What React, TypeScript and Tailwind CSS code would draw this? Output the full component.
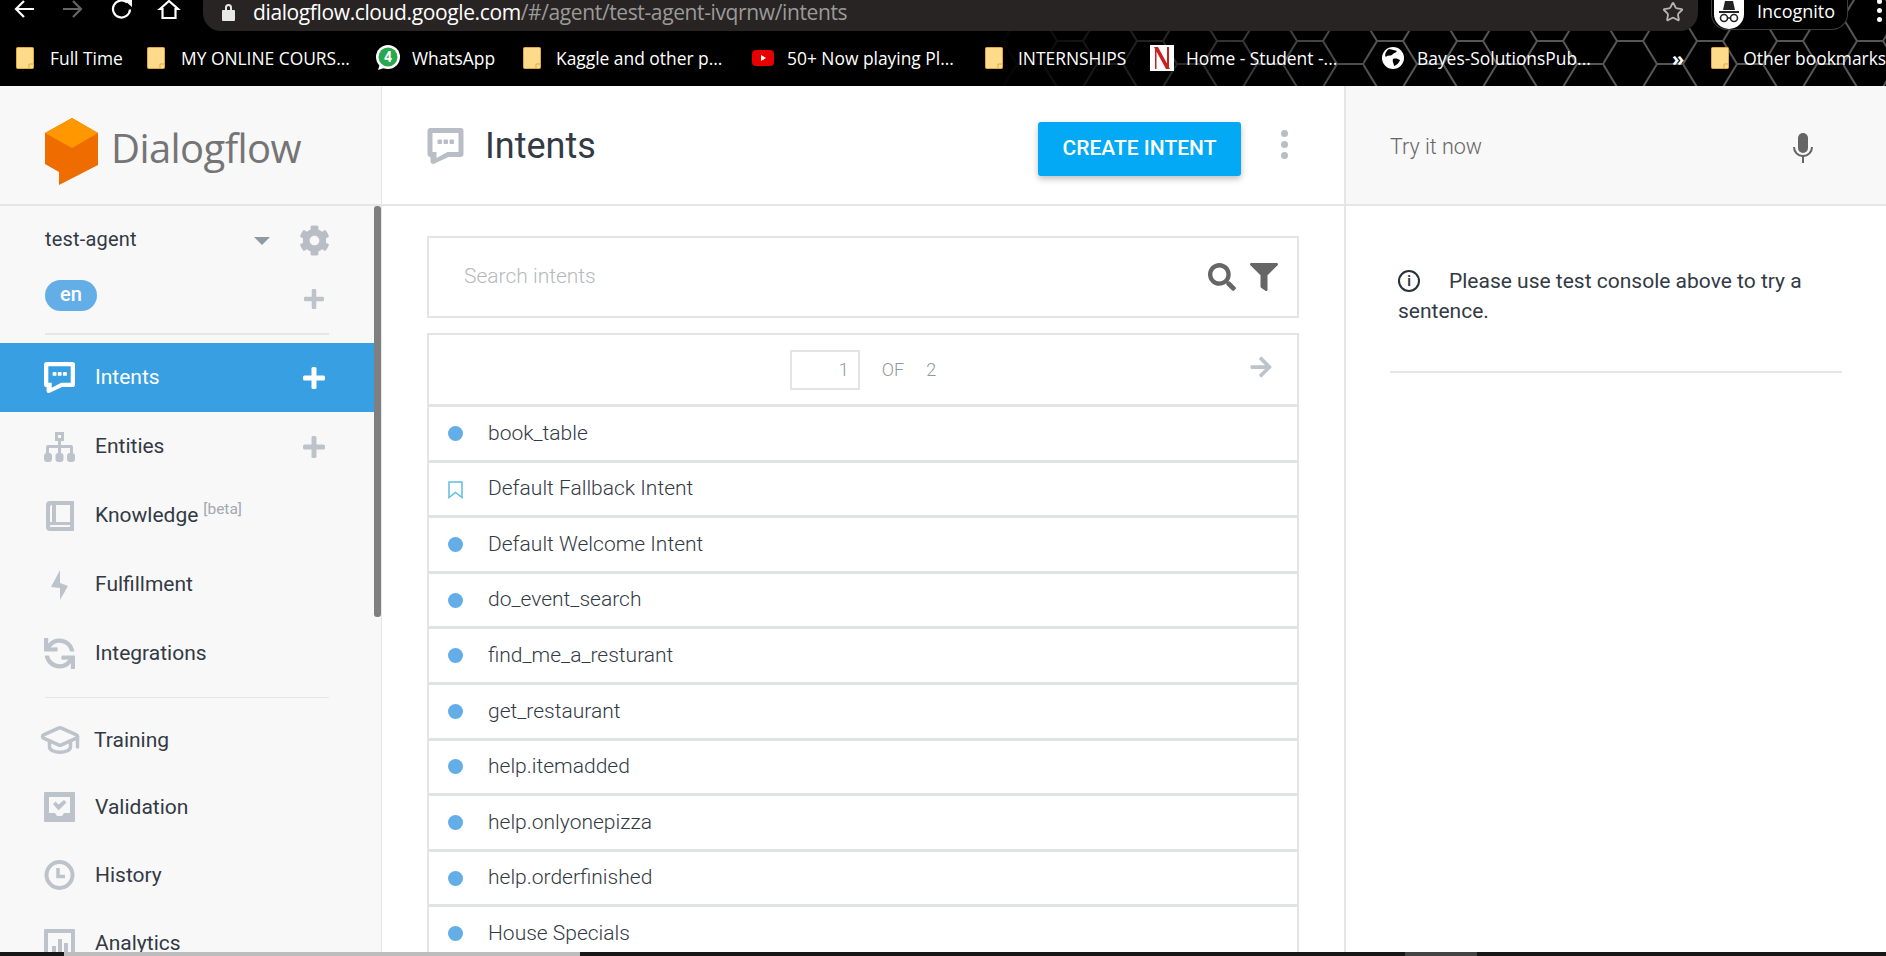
import { Star, GraduationCap } from "lucide-react";
import { FaArrowRight, FaCog, FaFilter, FaSearch, FaSync } from "react-icons/fa";
import type { ReactNode } from "react";

const intents = [
  "book_table",
  "Default Fallback Intent",
  "Default Welcome Intent",
  "do_event_search",
  "find_me_a_resturant",
  "get_restaurant",
  "help.itemadded",
  "help.onlyonepizza",
  "help.orderfinished",
  "House Specials",
];

function Folder() {
  return (
    <svg width="18" height="22" viewBox="0 0 18 22" className="shrink-0">
      <rect x="0.5" y="0.5" width="17" height="21" rx="1" fill="#fedb8b" stroke="#e0a93c" />
      <path d="M13 21v-4h4" fill="none" stroke="#e0a93c" />
    </svg>
  );
}

function WhatsApp() {
  return (
    <svg width="24" height="26" viewBox="0 0 24 26" className="shrink-0">
      <circle cx="12" cy="12" r="12" fill="#fff" />
      <circle cx="12" cy="12" r="9.5" fill="#2aa84f" />
      <path d="M2 25l2-6 4 4z" fill="#fff" />
      <text x="12" y="17" textAnchor="middle" fontSize="14" fontWeight="700" fill="#fff" fontFamily="Roboto, sans-serif">4</text>
    </svg>
  );
}

function YouTube() {
  return (
    <svg width="22" height="22" viewBox="0 0 22 22" className="shrink-0">
      <rect x="0" y="3" width="22" height="16" rx="4" fill="#e60000" />
      <path d="M9 8l5 3-5 3z" fill="#fff" />
    </svg>
  );
}

function NetflixN() {
  return (
    <div className="w-[24px] h-[26px] bg-white shrink-0 flex items-center justify-center">
      <svg width="20" height="24" viewBox="0 0 20 24">
        <path d="M3 1h1.500v22H3zM15 1h2v22h-2zM2 1h4l12 22h-4z" fill="#c8201c" />
      </svg>
    </div>
  );
}

function Globe() {
  return (
    <svg width="22" height="22" viewBox="0 0 22 22" className="shrink-0">
      <circle cx="11" cy="11" r="11" fill="#fff" />
      <path d="M7 2c3 1 6 1 8 2-1 2-4 2-5 4-2 1-5 0-6 2C2 8 4 4 7 2zM11 12c3-1 5 0 7 1-1 3-3 5-6 6 0-3-2-4-1-7z" fill="#000" />
    </svg>
  );
}

const bookmarks: { label: string; icon: ReactNode; width: string; gap: string }[] = [
  { label: "Full Time", icon: <Folder />, width: "w-[131px]", gap: "gap-[16px]" },
  { label: "MY ONLINE COURS...", icon: <Folder />, width: "w-[229px]", gap: "gap-[16px]" },
  { label: "WhatsApp", icon: <WhatsApp />, width: "w-[147px]", gap: "gap-[12px]" },
  { label: "Kaggle and other p...", icon: <Folder />, width: "w-[229px]", gap: "gap-[15px]" },
  { label: "50+ Now playing Pl...", icon: <YouTube />, width: "w-[233px]", gap: "gap-[13px]" },
  { label: "INTERNSHIPS", icon: <Folder />, width: "w-[165px]", gap: "gap-[15px]" },
  { label: "Home - Student -...", icon: <NetflixN />, width: "w-[232px]", gap: "gap-[12px]" },
  { label: "Bayes-SolutionsPub...", icon: <Globe />, width: "w-[290px]", gap: "gap-[13px]" },
];

function IntentsIcon({ className }: { className?: string }) {
  return (
    <svg viewBox="0 0 36 36" className={className} fill="currentColor">
      <path d="M3 0h30a3 3 0 0 1 3 3v23a3 3 0 0 1-3 3H21L6 36a3 3 0 0 1-3-3v-4a3 3 0 0 1-3-3V3a3 3 0 0 1 3-3zm2 5v19h4v6l11-6h11V5z" fillRule="evenodd" />
      <rect x="10" y="11.5" width="4.5" height="4.5" rx="1" />
      <rect x="16" y="11.5" width="4.5" height="4.5" rx="1" />
      <rect x="22" y="11.5" width="4.5" height="4.5" rx="1" />
    </svg>
  );
}

function EntitiesIcon() {
  return (
    <svg viewBox="0 0 31 30" className="w-[31px] h-[30px]" fill="#bdc3cb">
      <path d="M11 0h9v9h-3v4h10a2 2 0 0 1 2 2v6h-3v-5h-9v5h-3v-5H5v5H2v-6a2 2 0 0 1 2-2h10V9h-3zm3 3v3h3V3z" fillRule="evenodd" />
      <rect x="0" y="21" width="8" height="9" rx="3" />
      <rect x="11.5" y="21" width="8" height="9" rx="3" />
      <rect x="23" y="21" width="8" height="9" rx="3" />
    </svg>
  );
}

function KnowledgeIcon() {
  return (
    <svg viewBox="0 0 28 30" className="w-[28px] h-[30px]" fill="#bdc3cb">
      <path d="M4 0h24v30H4a4 4 0 0 1-4-4V4a4 4 0 0 1 4-4zm2 4a2 2 0 0 0-2 2v15h2zm4 0v17h14V4zM4 25v1h20v-2H5a1 1 0 0 0-1 1z" fillRule="evenodd" />
    </svg>
  );
}

function BoltIcon() {
  return (
    <svg viewBox="0 0 17 30" className="w-[17px] h-[30px]" fill="#bdc3cb">
      <path d="M9 0v13l8 3-8 14V18L0 17z" />
    </svg>
  );
}

function ValidationIcon() {
  return (
    <svg viewBox="0 0 31 30" className="w-[31px] h-[30px]" fill="#bdc3cb">
      <path d="M1 0h29a1 1 0 0 1 1 1v28a1 1 0 0 1-1 1H1a1 1 0 0 1-1-1V1a1 1 0 0 1 1-1zm4 5v16h6l2 3h5l2-3h6V5z" fillRule="evenodd" />
      <path d="M9 12l2.500-2.500 3 3L20 8l2.500 2.500-8 8z" />
    </svg>
  );
}

function HistoryIcon() {
  return (
    <svg viewBox="0 0 31 30" className="w-[31px] h-[30px]" fill="none" stroke="#bdc3cb">
      <circle cx="15.500" cy="15" r="13" strokeWidth="4" />
      <path d="M14 8v8.500h7" strokeWidth="3.500" />
    </svg>
  );
}

function AnalyticsIcon() {
  return (
    <svg viewBox="0 0 31 30" className="w-[31px] h-[30px]" fill="#bdc3cb">
      <path d="M1 0h29a1 1 0 0 1 1 1v28a1 1 0 0 1-1 1H1a1 1 0 0 1-1-1V1a1 1 0 0 1 1-1zm3 4v22h23V4z" fillRule="evenodd" />
      <rect x="8" y="17" width="4" height="9" />
      <rect x="14" y="10" width="4" height="16" />
      <rect x="20" y="14" width="4" height="12" />
    </svg>
  );
}

function PlusIcon({ className }: { className: string }) {
  return (
    <svg viewBox="0 0 22 22" className={className} fill="currentColor">
      <rect x="8.500" y="0" width="5" height="22" rx="1.500" />
      <rect x="0" y="8.500" width="22" height="5" rx="1.500" />
    </svg>
  );
}

function NavRow({ icon, label, plus, active, height = "h-[69px]", beta, textClass = "ml-[20px]" }: {
  icon: ReactNode;
  label: string;
  plus?: boolean;
  active?: boolean;
  height?: string;
  beta?: boolean;
  textClass?: string;
}) {
  return (
    <div className={`${height} w-[374px] flex items-center pl-[44px] ${active ? "bg-[#389fe2] text-white" : "text-[#333a45]"}`}>
      <div className="w-[31px] flex justify-center shrink-0">{icon}</div>
      <span className={`${textClass} text-[21px] leading-none`}>{label}</span>
      {beta && <span className="ml-[5px] -mt-[12px] text-[15.500px] leading-none text-[#a3a9b1]">[beta]</span>}
      {plus && (
        <div className="ml-auto mr-[49px]">
          <PlusIcon className={`w-[22px] h-[22px] ${active ? "text-white" : "text-[#bdc3cb]"}`} />
        </div>
      )}
    </div>
  );
}

function Sidebar() {
  return (
    <aside className="relative w-[382px] shrink-0 bg-[#f8f8f8] border-r border-[#e6e6e6] overflow-hidden">
      <div className="h-[120px] border-b-2 border-[#e6e6e6] flex items-start pl-[45px] pt-[32px]">
        <svg width="53" height="67" viewBox="0 0 53 67" className="shrink-0">
          <path d="M27 0l26 15v32L14 67V54L0 46V15z" fill="#ef6c00" />
          <path d="M27 0l26 15-26 15L0 15z" fill="#ff9800" />
        </svg>
        <span className="ml-[13px] mt-[2px] text-[40px] leading-[56px] tracking-[-0.6px] text-[#757575] font-['Open_Sans',sans-serif]">Dialogflow</span>
      </div>
      <div className="h-[34px] mt-[16px] flex items-center pl-[45px] pr-[51px] text-[20px] text-[#333a45]">
        <span className="tracking-[0.2px]">test-agent</span>
        <div className="ml-auto w-0 h-0 border-x-[8px] border-x-transparent border-t-[8px] border-t-[#8f9aa3] mt-[4px]" />
        <FaCog className="w-[31px] h-[31px] ml-[29px] mt-[3px] text-[#b9bec6]" />
      </div>
      <div className="mt-[24px] flex items-center pl-[45px] pr-[57px]">
        <span className="w-[52px] h-[31px] rounded-full bg-[#64aee8] text-white text-[20px] font-medium leading-[29px] text-center">en</span>
        <PlusIcon className="ml-auto mt-[6px] w-[20px] h-[20px] text-[#bdc3cb]" />
      </div>
      <div className="mt-[22px] ml-[45px] w-[284px] h-[2px] bg-[#e6e6e6]" />
      <div className="mt-[8px]">
        <NavRow active plus label="Intents" icon={<IntentsIcon className="w-[31px] h-[31px] text-white" />} />
        <NavRow plus label="Entities" icon={<EntitiesIcon />} />
        <NavRow beta label="Knowledge" icon={<KnowledgeIcon />} />
        <NavRow label="Fulfillment" icon={<BoltIcon />} />
        <NavRow label="Integrations" icon={<FaSync className="w-[31px] h-[31px] text-[#bdc3cb] -scale-x-100" />} />
      </div>
      <div className="mt-[9px] ml-[45px] w-[284px] h-px bg-[#e6e6e6]" />
      <div className="mt-[9px]">
        <NavRow label="Training" height="h-[66px]" textClass="ml-[19px]" icon={<GraduationCap className="w-[42px] h-[42px] shrink-0 text-[#bdc3cb]" strokeWidth={2} />} />
        <NavRow label="Validation" height="h-[68px]" icon={<ValidationIcon />} />
        <NavRow label="History" height="h-[68px]" icon={<HistoryIcon />} />
        <NavRow label="Analytics" height="h-[69px]" icon={<AnalyticsIcon />} />
      </div>
      <div className="absolute right-0 top-[120px] w-[7px] h-[411px] rounded-[3px] bg-[#7f7f7f]" />
    </aside>
  );
}

function MainPanel() {
  return (
    <main className="w-[962px] shrink-0 bg-white overflow-hidden">
      <div className="h-[120px] border-b-2 border-[#e6e6e6] flex items-start pl-[45px]">
        <IntentsIcon className="w-[37px] h-[36px] mt-[42px] text-[#b9bec6]" />
        <h1 className="ml-[21px] mt-[38px] text-[36px] leading-[44px] text-[#333a45]">Intents</h1>
        <button className="ml-auto mt-[36px] w-[203px] h-[54px] rounded-[3px] bg-[#03a9f4] text-white text-[21px] font-medium shadow-[0_3px_6px_rgba(0,0,0,0.25)]">CREATE INTENT</button>
        <div className="ml-[40px] mr-[56px] mt-[44px] flex flex-col gap-[4px]">
          <span className="w-[7px] h-[7px] rounded-full bg-[#b9bec6]" />
          <span className="w-[7px] h-[7px] rounded-full bg-[#b9bec6]" />
          <span className="w-[7px] h-[7px] rounded-full bg-[#b9bec6]" />
        </div>
      </div>
      <div className="ml-[45px] w-[872px] mt-[30px]">
        <div className="h-[82px] border-2 border-[#e4e4e4] flex items-center pl-[35px] pr-[19px]">
          <span className="text-[21px] font-light text-[#b5b9bd]">Search intents</span>
          <FaSearch className="ml-auto w-[28px] h-[28px] text-[#666]" />
          <FaFilter className="ml-[14px] w-[28px] h-[28px] text-[#666]" />
        </div>
        <div className="mt-[15px] border-x-2 border-t-2 border-[#e4e4e4]">
          <div className="relative h-[72px] flex items-center justify-center border-b-[3px] border-[#e4e4e4]">
            <div className="w-[70px] h-[40px] border-2 border-[#e4e4e4] flex items-center justify-end pr-[9px] text-[18px] font-light text-[#8f979f]">1</div>
            <span className="ml-[22px] text-[18px] font-light text-[#8f979f]">OF</span>
            <span className="ml-[22px] text-[18px] font-light text-[#8f979f]">2</span>
            <FaArrowRight className="absolute right-[24px] top-[20px] w-[24px] h-[24px] text-[#bdc3cb]" />
          </div>
          {intents.map((name) => (
            <div key={name} className="h-[55.6px] flex items-center border-b-[3px] border-[#e1e3e3] pl-[19px]">
              {name === "Default Fallback Intent" ? (
                <svg width="15" height="18" viewBox="0 0 15 18" className="shrink-0 mt-[3px]" fill="none" stroke="#5cc0e0" strokeWidth="1.500">
                  <path d="M1 1h13v15.500l-6.500-5-6.500 5z" />
                </svg>
              ) : (
                <span className="w-[15px] h-[15px] rounded-full bg-[#64aee8] shrink-0" />
              )}
              <span className="ml-[25px] text-[21px] font-light text-[#333a45]">{name}</span>
            </div>
          ))}
        </div>
      </div>
    </main>
  );
}

function TryPanel() {
  return (
    <section className="flex-1 min-w-0 bg-white border-l-2 border-[#e6e6e6]">
      <div className="h-[120px] bg-[#f8f8f8] border-b-2 border-[#e6e6e6] flex items-center pt-[5px] pl-[44px] pr-[72px]">
        <span className="text-[21.500px] font-light text-[#666]">Try it now</span>
        <svg viewBox="0 0 22 30" className="ml-auto w-[22px] h-[30px]" fill="#666">
          <rect x="6" y="0" width="10" height="20" rx="5" />
          <path d="M1 14h2a8 8 0 0 0 16 0h2a10 10 0 0 1-9 10v6h-2v-6a10 10 0 0 1-9-10z" />
        </svg>
      </div>
      <div className="ml-[44px] mr-[44px]">
        <div className="pt-[60px] text-[21px] leading-[30px] text-[#333a45] pl-[8px] pb-[45px] border-b-2 border-[#e6e6e6]">
          <span className="inline-flex align-[2px] w-[22px] h-[22px] mr-[29px] rounded-full border-[2.500px] border-[#263238] items-center justify-center text-[14px] font-bold leading-none">i</span>
          Please use test console above to try a sentence.
        </div>
      </div>
    </section>
  );
}

function BrowserChrome() {
  return (
    <header className="relative h-[86px] shrink-0 bg-black text-white overflow-hidden font-['Open_Sans',sans-serif]">
      <svg className="absolute inset-0 w-full h-full" aria-hidden="true">
        <defs>
          <pattern id="hex" x="1443" y="41" width="80" height="46" patternUnits="userSpaceOnUse">
            <path d="M0 23L14 0H40L54 23L40 46H14ZM54 23H80" fill="none" stroke="#565656" strokeWidth="2" />
          </pattern>
          <linearGradient id="fade" x1="0" x2="1">
            <stop offset="0.52" stopColor="#000" />
            <stop offset="0.74" stopColor="#fff" />
          </linearGradient>
          <mask id="fadeMask">
            <rect width="100%" height="100%" fill="url(#fade)" />
          </mask>
        </defs>
        <rect width="100%" height="100%" fill="url(#hex)" mask="url(#fadeMask)" />
      </svg>
      <div className="relative h-[31px] flex items-start">
        <svg width="180" height="22" viewBox="0 0 180 22" className="ml-[14px] shrink-0" fill="none" strokeWidth="2.200">
          <path d="M20 9H2M10 1L2 9l8 8" stroke="#fff" />
          <path d="M49 9h18M59 1l8 8-8 8" stroke="#666" />
          <path d="M113 2.500a8.500 8.500 0 1 0 3 7" stroke="#fff" />
          <path d="M110 0l8 0v7z" fill="#fff" />
          <path d="M146 9l9-8 9 8h-2.500v9h-13V9z" stroke="#fff" />
        </svg>
        <div className="ml-[9px] w-[1495px] h-[31px] bg-[#292424] rounded-b-[18px] flex items-start pl-[19px] pr-[14px]">
          <svg width="13" height="18" viewBox="0 0 13 18" className="mt-[3px] shrink-0" fill="#e8e8e8">
            <path d="M3 7V4.500a3.500 3.500 0 0 1 7 0V7h2a1 1 0 0 1 1 1v9a1 1 0 0 1-1 1H1a1 1 0 0 1-1-1V8a1 1 0 0 1 1-1zm2 0h3V4.500a1.500 1.500 0 0 0-3 0z" fillRule="evenodd" />
          </svg>
          <span className="ml-[18px] text-[21px] leading-[24px] whitespace-nowrap tracking-[-0.38px] text-white">
            dialogflow.cloud.google.com<span className="text-[#9a9a9a]">/#/agent/test-agent-ivqrnw/intents</span>
          </span>
          <Star className="ml-auto mt-[1px] w-[22px] h-[22px] text-[#b5b5b5]" strokeWidth={2} />
        </div>
        <div className="ml-[13px] w-[137px] h-[30px] rounded-b-[16px] border border-t-0 border-[#3c3c3c] flex items-start pl-[2px] bg-black">
          <div className="relative w-[30px] h-[29px] rounded-b-full bg-white overflow-hidden shrink-0">
            <svg viewBox="0 0 30 29" className="w-[30px] h-[29px]" fill="none" stroke="#222" strokeWidth="1.600">
              <path d="M9 10l2-9h8l2 9z" fill="#222" stroke="none" />
              <path d="M5 12h20" strokeWidth="2" />
              <circle cx="10" cy="18" r="3.500" />
              <circle cx="20" cy="18" r="3.500" />
              <path d="M13.500 18h3" />
            </svg>
          </div>
          <span className="ml-[13px] text-[18px] leading-[22px] whitespace-nowrap">Incognito</span>
        </div>
        <div className="ml-[29px] flex flex-col gap-[4px] -mt-[1px]">
          <span className="w-[5px] h-[5px] rounded-full bg-white" />
          <span className="w-[5px] h-[5px] rounded-full bg-white" />
          <span className="w-[5px] h-[5px] rounded-full bg-white" />
        </div>
      </div>
      <div className="relative h-[55px] flex items-center pl-[16px] text-[17.400px] whitespace-nowrap">
        {bookmarks.map((b) => (
          <div key={b.label} className={`${b.width} ${b.gap} shrink-0 flex items-center`}>
            {b.icon}
            <span>{b.label}</span>
          </div>
        ))}
        <span className="w-[39px] text-[20px] font-bold">»</span>
        <span className="w-px h-[30px] bg-[#555]" />
        <div className="ml-[27px] flex items-center gap-[14px] shrink-0">
          <Folder />
          <span>Other bookmarks</span>
        </div>
      </div>
    </header>
  );
}

export default function App() {
  return (
    <div className="h-screen w-full flex flex-col overflow-hidden bg-white font-['Roboto',sans-serif]">
      <BrowserChrome />
      <div className="flex-1 min-h-0 flex">
        <Sidebar />
        <MainPanel />
        <TryPanel />
      </div>
      <div className="h-[4px] shrink-0 flex bg-[#171717]">
        <div className="w-[64px]" />
        <div className="w-[516px] bg-[#bdbdbd]" />
        <div className="ml-[825px] w-[72px] bg-[#444]" />
      </div>
    </div>
  );
}
